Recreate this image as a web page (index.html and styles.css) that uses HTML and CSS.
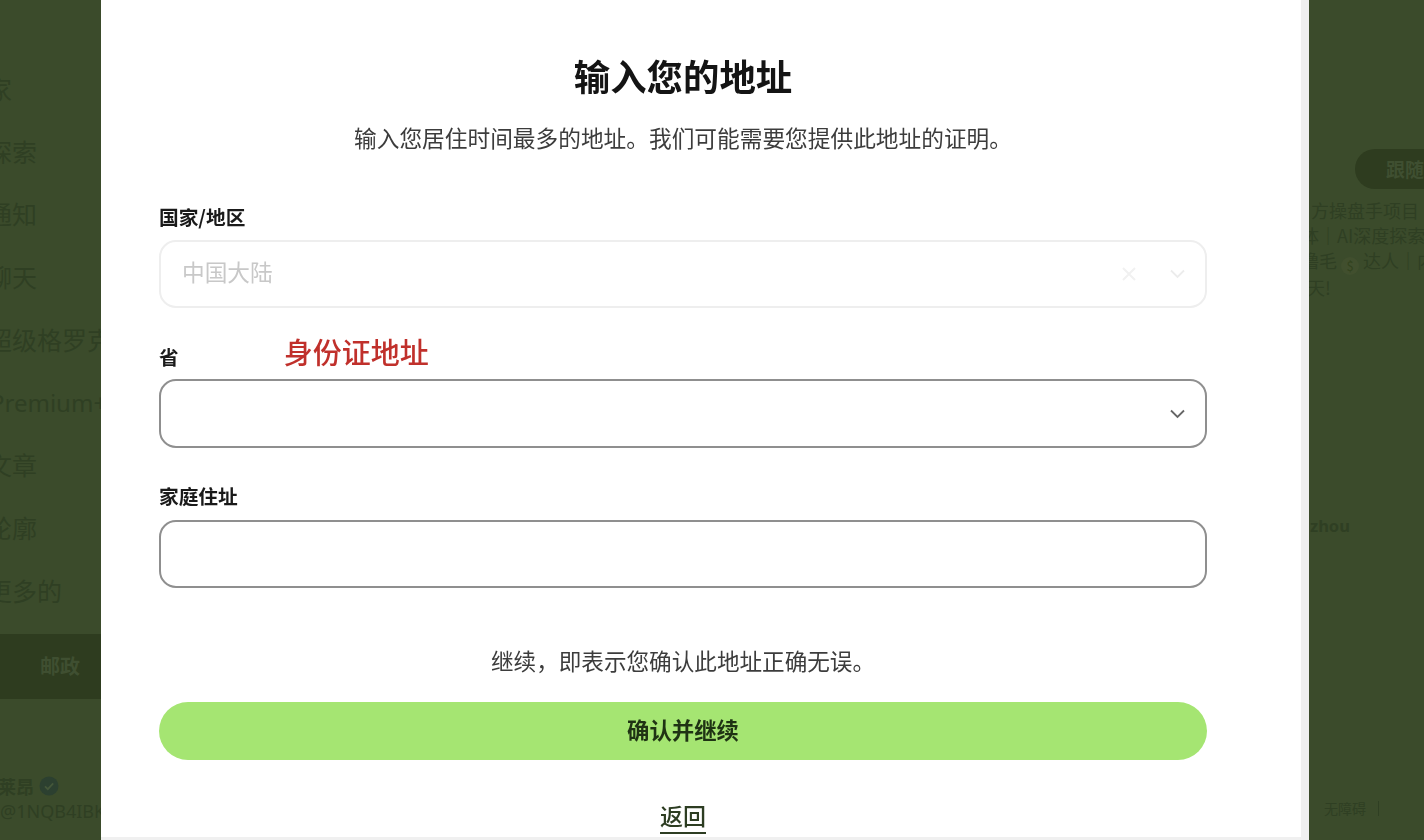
FILE: index.html
```html
<!DOCTYPE html>
<html lang="zh-CN">
  <head>
    <meta charset="UTF-8" />
    <meta name="viewport" content="width=device-width, initial-scale=1.0" />
    <title>输入您的地址</title>
    <link rel="stylesheet" href="styles.css">
  </head>
  <body>
    <div class="page">
      <aside class="sidebar">
        <nav class="nav">
          <a>家</a>
          <a>探索</a>
          <a>通知</a>
          <a>聊天</a>
          <a>超级格罗克</a>
          <a class="nav-latin">Premium+</a>
          <a>文章</a>
          <a>轮廓</a>
          <a>更多的</a>
        </nav>
        <div class="post-btn"><span>邮政</span></div>
        <div class="account">
          <div class="account-name">
            <span>莱昂</span>
            <svg class="verified" viewBox="0 0 20 20">
              <circle cx="10" cy="10" r="9.5" fill="#2c4030" />
              <path d="M6 10.3l2.8 2.8L14.2 7.4" fill="none" stroke="#44573a" stroke-width="1.8" />
            </svg>
          </div>
          <div class="account-handle">@1NQB4IBK</div>
        </div>
      </aside>

      <div class="dialog-wrap">
        <main class="dialog">
          <h1 class="title">输入您的地址</h1>
          <p class="subtitle">输入您居住时间最多的地址。我们可能需要您提供此地址的证明。</p>

          <label class="label first">国家/地区</label>
          <div class="field disabled">
            <span class="field-value">中国大陆</span>
            <svg class="icon-x" viewBox="0 0 16 16">
              <path d="M2 2l12 12M14 2L2 14" />
            </svg>
            <svg class="icon-chevron" viewBox="0 0 16 10">
              <path d="M1.5 1.5L8 8l6.500-6.500" />
            </svg>
          </div>

          <div class="label-row">
            <label class="label">省</label>
            <span class="note">身份证地址</span>
          </div>
          <div class="field tall">
            <svg class="icon-chevron" viewBox="0 0 16 10">
              <path d="M1.5 1.5L8 8l6.500-6.500" />
            </svg>
          </div>

          <label class="label third">家庭住址</label>
          <div class="field home"></div>

          <p class="confirm-text">继续，即表示您确认此地址正确无误。</p>
          <button class="confirm-btn">确认并继续</button>
          <div class="back-row"><a class="back">返回</a></div>
        </main>
      </div>

      <aside class="rightbar">
        <div class="follow-row">
          <div class="follow-btn">跟随</div>
        </div>
        <div class="bio">
          <div>方操盘手项目</div>
          <div>体｜AI深度探索</div>
          <div>撸毛<span class="coin">$</span>达人｜内</div>
          <div class="bio-end">天!</div>
        </div>
        <div class="username">zhou</div>
        <div class="footer-link">无障碍<span class="sep"></span></div>
      </aside>
    </div>
  </body>
</html>
```

FILE: styles.css
```css
* {
  box-sizing: border-box;
}
html,
body {
  margin: 0;
  height: 100%;
  overflow: hidden;
}
body {
  background-color: #3b4b2b;
  font-family: "Noto Sans CJK SC", "Noto Sans", sans-serif;
}
.page {
  display: grid;
  grid-template-columns: 101px 1208px 115px;
  height: 840px;
}

/* dimmed page behind the dialog */
.sidebar {
  overflow: hidden;
  color: #2f3f23;
}
.nav {
  display: flex;
  flex-direction: column;
  margin-top: 57px;
  margin-left: -13px;
  width: 200px;
}
.nav a {
  height: 62.700px;
  line-height: 62px;
  font-size: 25px;
  white-space: nowrap;
}
.nav .nav-latin {
  padding-left: 3px;
  font-family: "Noto Sans", sans-serif;
  font-size: 24px;
  line-height: 66px;
}
.post-btn {
  height: 65px;
  margin-top: 13px;
  padding-left: 40px;
  background-color: #2e3c1f;
  color: #3f4f31;
  font-size: 20px;
  font-weight: 700;
  line-height: 64px;
}
.account {
  margin-top: 73px;
  white-space: nowrap;
}
.account-name {
  display: flex;
  align-items: center;
  gap: 5px;
  height: 28px;
  margin-left: -2px;
  font-size: 18px;
  font-weight: 700;
}
.verified {
  width: 20px;
  height: 20px;
}
.account-handle {
  height: 24px;
  font-family: "Noto Sans", sans-serif;
  font-size: 18px;
  line-height: 22px;
  width: 101px;
  overflow: hidden;
}

.dialog-wrap {
  padding: 0 8px 3px 0;
  background-color: #f0f0f0;
}
.dialog {
  height: 837px;
  padding: 0 94px 0 58px;
  overflow: hidden;
  background-color: #fff;
  filter: blur(0.4px);
}
.title {
  height: 44px;
  margin: 55px 0 0;
  font-size: 36.400px;
  font-weight: 700;
  line-height: 40px;
  text-align: center;
  color: #141414;
}
.subtitle {
  height: 30px;
  margin: 26px 0 0;
  font-size: 22.700px;
  line-height: 26px;
  text-align: center;
  color: #3c3c3c;
}
.label {
  display: block;
  height: 24px;
  font-size: 19.700px;
  font-weight: 700;
  line-height: 22px;
  color: #1a1a1a;
}
.label.first {
  margin-top: 51px;
}
.label.third {
  margin-top: 37px;
}
.label-row {
  display: flex;
  align-items: flex-end;
  gap: 105px;
  height: 42px;
  margin-top: 20px;
}
.note {
  height: 42px;
  font-size: 29px;
  font-weight: 500;
  line-height: 46px;
  color: #c0302b;
}
.field {
  display: flex;
  align-items: center;
  height: 68px;
  margin-top: 10px;
  padding: 0 19px 0 21px;
  border: 2px solid #8f8f8f;
  border-radius: 17px;
}
.field.tall {
  height: 69px;
  margin-top: 9px;
}
.field.home {
  margin-top: 11px;
}
.field.disabled {
  border-color: #eeeeee;
}
.field-value {
  font-size: 22.700px;
  line-height: 26px;
  height: 30px;
  color: #c8c8c8;
}
.icon-chevron {
  width: 17px;
  height: 10px;
  margin-left: auto;
  fill: none;
  stroke: #666;
  stroke-width: 1.800;
}
.icon-x {
  width: 16px;
  height: 16px;
  margin-left: auto;
  fill: none;
  stroke: #f1f1f1;
  stroke-width: 2;
}
.disabled .icon-chevron {
  margin-left: 32px;
  stroke: #ececec;
}
.confirm-text {
  height: 30px;
  margin: 60px 0 0;
  font-size: 22.600px;
  line-height: 26px;
  text-align: center;
  color: #3c3c3c;
}
.confirm-btn {
  display: block;
  width: 100%;
  height: 58px;
  margin-top: 24px;
  padding: 0 0 4px;
  border: none;
  border-radius: 29px;
  background-color: #a5e572;
  color: #1f3314;
  font-family: inherit;
  font-size: 22.400px;
  font-weight: 700;
}
.back-row {
  display: flex;
  justify-content: center;
  margin-top: 41px;
}
.back {
  height: 33px;
  border-bottom: 2px solid #2d3d22;
  font-size: 23px;
  font-weight: 500;
  line-height: 28px;
  color: #2d3d22;
}

.rightbar {
  overflow: hidden;
  color: #2f3f23;
  white-space: nowrap;
}
.follow-row {
  margin-top: 149px;
  padding-left: 46px;
}
.follow-btn {
  width: 120px;
  height: 40px;
  padding-left: 31px;
  border-radius: 20px;
  background-color: #2e3c1f;
  color: #3f4f31;
  font-size: 19px;
  font-weight: 700;
  line-height: 39px;
}
.bio {
  margin-top: 9px;
  margin-left: 2px;
  font-size: 18px;
  line-height: 25px;
}
.bio div:nth-child(2),
.bio div:nth-child(3) {
  margin-left: -10px;
}
.bio .bio-end {
  margin-left: -4px;
}
.coin {
  display: inline-block;
  width: 18px;
  height: 18px;
  margin: 0 4px;
  border-radius: 50%;
  background-color: #414f2e;
  text-align: center;
  font-size: 13px;
  line-height: 18px;
  color: #33431f;
  vertical-align: -3px;
}
.username {
  margin-top: 214px;
  margin-left: 1px;
  font-family: "Noto Sans", sans-serif;
  font-size: 16.500px;
  font-weight: 700;
}
.footer-link {
  display: flex;
  align-items: center;
  margin-top: 261px;
  margin-left: 15px;
  font-size: 14px;
  line-height: 20px;
}
.sep {
  width: 1px;
  height: 15px;
  margin-left: 12px;
  background-color: #2f3f23;
}
```
